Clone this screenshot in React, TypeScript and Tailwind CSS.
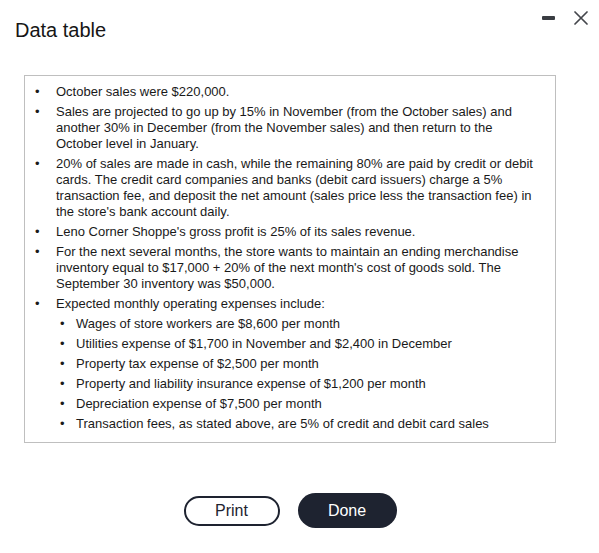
import React from "react";

const items: { text: string; sub?: string[] }[] = [
  { text: "October sales were $220,000." },
  {
    text: "Sales are projected to go up by 15% in November (from the October sales) and another 30% in December (from the November sales) and then return to the October level in January.",
  },
  {
    text: "20% of sales are made in cash, while the remaining 80% are paid by credit or debit cards. The credit card companies and banks (debit card issuers) charge a 5% transaction fee, and deposit the net amount (sales price less the transaction fee) in the store's bank account daily.",
  },
  { text: "Leno Corner Shoppe's gross profit is 25% of its sales revenue." },
  {
    text: "For the next several months, the store wants to maintain an ending merchandise inventory equal to $17,000 + 20% of the next month's cost of goods sold. The September 30 inventory was $50,000.",
  },
  {
    text: "Expected monthly operating expenses include:",
    sub: [
      "Wages of store workers are $8,600 per month",
      "Utilities expense of $1,700 in November and $2,400 in December",
      "Property tax expense of $2,500 per month",
      "Property and liability insurance expense of $1,200 per month",
      "Depreciation expense of $7,500 per month",
      "Transaction fees, as stated above, are 5% of credit and debit card sales",
    ],
  },
];

export default function App() {
  return (
    <div className="w-[599px] h-[553px] bg-white font-['Liberation_Sans',Arial,sans-serif]">
      <div className="flex justify-between pl-[15px] pr-[11px] pt-[11px]">
        <h1 className="mt-[5px] text-[20px] leading-[28px] text-[#161616]">Data table</h1>
        <div className="flex items-center gap-[19px] h-[14px]">
          <div className="w-[13px] h-[4px] rounded-[1px] bg-[#3a3d42]" />
          <svg width="14" height="14" viewBox="0 0 14 14">
            <path d="M1 1L13 13M13 1L1 13" stroke="#44474c" strokeWidth="1.7" strokeLinecap="round" />
          </svg>
        </div>
      </div>

      <div className="ml-[24px] mt-[31px] w-[532px] border border-[#bfbfbf] pt-[8px] pb-[10px] pl-[10px] pr-[17px] text-[13px] leading-[16px] text-[#1a1a1a]">
        <ul className="flex flex-col gap-[4px]">
          {items.map((it) => (
            <li key={it.text} className="flex">
              <span className="w-[21px] shrink-0">•</span>
              <div>
                <div>{it.text}</div>
                {it.sub && (
                  <ul className="mt-[4px] flex flex-col gap-[4px] pl-[4px]">
                    {it.sub.map((s) => (
                      <li key={s} className="flex">
                        <span className="w-[16px] shrink-0">•</span>
                        <span>{s}</span>
                      </li>
                    ))}
                  </ul>
                )}
              </div>
            </li>
          ))}
        </ul>
      </div>

      <div className="ml-[24px] mt-[50px] w-[532px] flex justify-center items-center gap-[18px]">
        <button className="w-[96px] h-[30px] rounded-full border-2 border-[#1e2330] bg-white text-[16px] text-[#1e2330]">
          Print
        </button>
        <button className="w-[99px] h-[35px] rounded-full bg-[#1e2330] text-[16px] text-white">
          Done
        </button>
      </div>
    </div>
  );
}
